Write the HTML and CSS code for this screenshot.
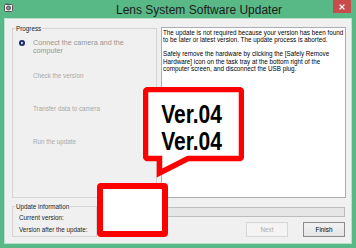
FILE: index.html
```html
<!DOCTYPE html>
<html lang="en">
<head>
<meta charset="utf-8">
<title>Lens System Software Updater</title>
<link rel="stylesheet" href="styles.css">
</head>
<body>
<div class="window">
  <div class="titlebar">
    <svg class="app-icon" viewBox="0 0 9 10" aria-hidden="true">
      <rect x="0.5" y="1.5" width="8" height="7" rx="1" fill="#e9ecea" stroke="#5a5a5a" stroke-width="1"/>
      <circle cx="4.5" cy="5" r="2" fill="#8a8f8c" stroke="#3a3a3a" stroke-width="0.8"/>
      <rect x="1.5" y="0.5" width="3" height="1.5" fill="#5a5a5a"/>
    </svg>
    <div class="title">Lens System Software Updater</div>
    <div class="close" aria-label="Close">
      <svg viewBox="0 0 6 6" aria-hidden="true"><path d="M0.6 0.6L5.4 5.4M5.4 0.6L0.6 5.4" stroke="#fff" stroke-width="1.3"/></svg>
    </div>
  </div>
  <div class="content">
    <div class="top">
      <div class="group progress">
        <div class="group-title">Progress</div>
        <ul class="steps">
          <li class="step current">
            <span class="step-icon"><svg viewBox="0 0 6 6" aria-hidden="true"><circle cx="3" cy="3" r="3" fill="#142766"/><path d="M2.2 1.5L4.5 3L2.2 4.5Z" fill="#fff"/></svg></span>
            <span class="step-text">Connect the camera and the<br>computer</span>
          </li>
          <li class="step"><span class="step-icon"></span><span class="step-text">Check the version</span></li>
          <li class="step"><span class="step-icon"></span><span class="step-text">Transfer data to camera</span></li>
          <li class="step"><span class="step-icon"></span><span class="step-text">Run the update</span></li>
        </ul>
      </div>
      <div class="message">The update is not required because your version has been found<br>to be later or latest version. The update process is aborted.<br><br>Safely remove the hardware by clicking the [Safely Remove<br>Hardware] icon on the task tray at the bottom right of the<br>computer screen, and disconnect the USB plug.</div>
    </div>
    <div class="bottom">
      <div class="group info">
        <div class="group-title">Update information</div>
        <div class="info-list">
          <div class="info-row">Current version:</div>
          <div class="info-row">Version after the update:</div>
        </div>
      </div>
      <div class="actions">
        <div class="progressbar"></div>
        <div class="buttons">
          <button class="btn" disabled>Next</button>
          <button class="btn primary">Finish</button>
        </div>
      </div>
    </div>
  </div>
  <div class="callout">
    <svg class="callout-shape" viewBox="0 0 101 95" aria-hidden="true">
      <path d="M5.5 2.5H95.5Q98.5 2.5 98.5 5.5V68.5Q98.5 71.5 95.5 71.5H45L16.5 86V71.5H5.5Q2.5 71.5 2.5 68.5V5.5Q2.5 2.5 5.5 2.5Z" fill="#fff" stroke="#fe0000" stroke-width="5.5"/>
    </svg>
    <div class="callout-text">Ver.04<br>Ver.04</div>
  </div>
  <div class="value-box"></div>
</div>
</body>
</html>
```
FILE: styles.css
```css
html, body {
  margin: 0;
  padding: 0;
}

.window {
  position: relative;
  width: 356px;
  height: 248px;
  background: #58b886;
  font-family: "Liberation Sans", Arial, sans-serif;
  overflow: hidden;
}

.titlebar {
  height: 18px;
  display: flex;
  align-items: flex-start;
}

.app-icon {
  width: 9px;
  height: 10px;
  margin: 3px 0 0 4px;
  flex: none;
}

.title {
  margin-left: 103px;
  font-size: 12px;
  line-height: 20px;
  color: #1c1c1c;
  white-space: nowrap;
}

.close {
  margin-left: auto;
  margin-right: 5px;
  width: 18px;
  height: 13px;
  background: #c94c4c;
  display: flex;
  align-items: center;
  justify-content: center;
}

.close svg {
  width: 6px;
  height: 6px;
}

.content {
  margin: 0 4px;
  height: 226px;
  box-sizing: border-box;
  border: 1px solid #b8e2cb;
  background: #f0f0f0;
  padding: 8px 5px 0 7px;
  display: flex;
  flex-direction: column;
}

.top {
  display: flex;
  gap: 4px;
  height: 171px;
  flex: none;
}

.group {
  border: 1px solid #d5d5d5;
  box-sizing: border-box;
}

.group-title {
  width: fit-content;
  margin: -4px 0 0 2px;
  padding: 0 1px;
  background: #f0f0f0;
  font-size: 6.3px;
  line-height: 7px;
  color: #1e1e1e;
  white-space: nowrap;
}

.progress {
  width: 145px;
  height: 170px;
  margin-top: 1px;
  flex: none;
}

.steps {
  list-style: none;
  margin: 6.5px 0 0;
  padding: 0 0 0 6px;
}

.step {
  display: flex;
  height: 33px;
}

.step-icon {
  width: 6px;
  height: 6px;
  margin: 1px 8px 0 0;
  flex: none;
}

.step-icon svg {
  display: block;
  width: 6px;
  height: 6px;
}

.step-text {
  font-size: 6.3px;
  line-height: 8px;
  color: #a9a9a9;
  white-space: nowrap;
}

.step.current .step-text {
  font-size: 7.2px;
  color: #969696;
}

.message {
  flex: 1;
  background: #fff;
  border: 1px solid #abadb3;
  padding: 0.5px 1px;
  font-size: 6.3px;
  line-height: 7.3px;
  color: #000;
  white-space: nowrap;
  overflow: hidden;
}

.bottom {
  display: flex;
  height: 31px;
  margin: 8px 1px 0 0;
  flex: none;
}

.info {
  width: 85px;
  height: 31px;
  flex: none;
}

.info-list {
  padding: 1.7px 0 0 6px;
}

.info-row {
  font-size: 6.3px;
  line-height: 12px;
  color: #1e1e1e;
  white-space: nowrap;
}

.actions {
  flex: 1;
  margin-left: 3px;
  display: flex;
  flex-direction: column;
}

.progressbar {
  height: 10px;
  margin-top: 1px;
  box-sizing: border-box;
  border: 1px solid #bcbcbc;
  background: #e6e6e6;
}

.buttons {
  display: flex;
  justify-content: flex-end;
  gap: 15px;
  margin-top: 5px;
}

.btn {
  width: 42px;
  height: 15px;
  box-sizing: border-box;
  padding: 0;
  margin: 0;
  font-family: "Liberation Sans", Arial, sans-serif;
  font-size: 6.3px;
  border: 1px solid #8c8c8c;
  border-radius: 0;
  background: linear-gradient(#f2f2f2, #e4e4e4);
  color: #000;
}

.btn:disabled {
  border-color: #d6d6d6;
  background: #f4f4f4;
  color: #ababab;
}

.callout {
  position: absolute;
  left: 143px;
  top: 87px;
  width: 101px;
  height: 95px;
}

.callout-shape {
  position: absolute;
  left: 0;
  top: 0;
  width: 101px;
  height: 95px;
}

.callout-text {
  position: relative;
  width: 97px;
  padding-top: 14px;
  text-align: center;
  font-family: "Liberation Sans", Arial, sans-serif;
  font-weight: bold;
  font-size: 25px;
  line-height: 26.5px;
  color: #000;
  transform: scaleX(0.84);
}

.value-box {
  position: absolute;
  left: 97px;
  top: 183px;
  width: 71px;
  height: 54px;
  box-sizing: border-box;
  border: 6px solid #fe0000;
  border-radius: 4px;
  background: #fff;
}
```
